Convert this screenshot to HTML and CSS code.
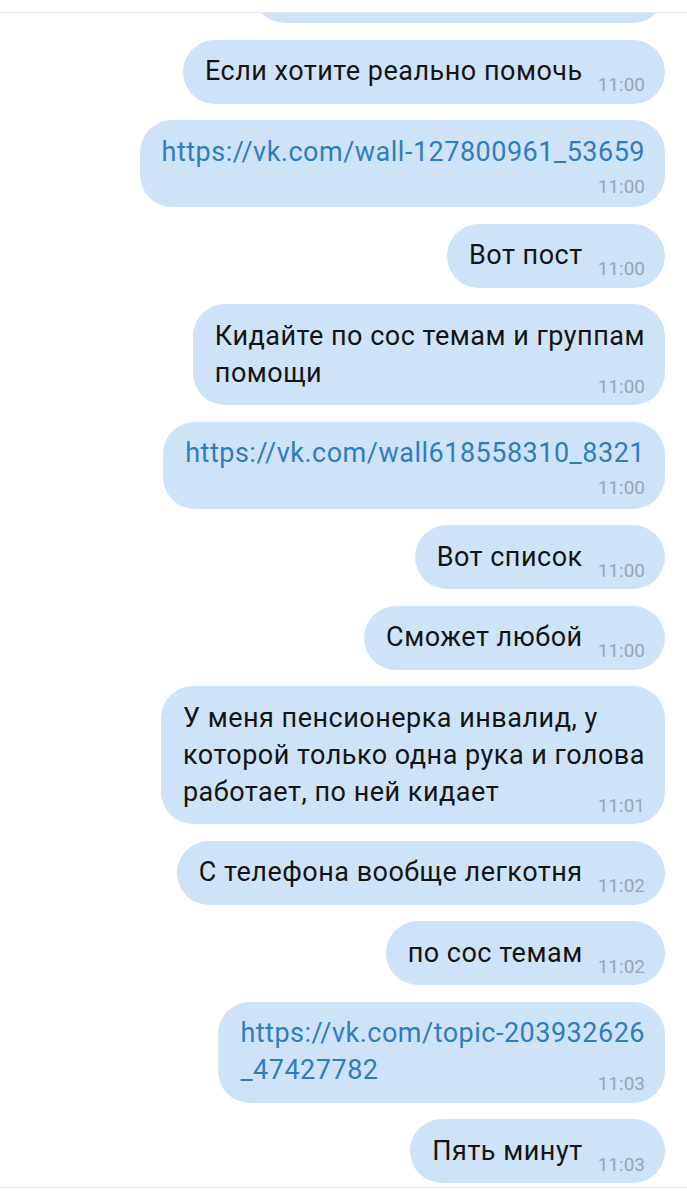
FILE: index.html
```html
<!DOCTYPE html>
<html lang="ru">
<head>
<meta charset="utf-8">
<title>Чат</title>
<link rel="stylesheet" href="styles.css">
</head>
<body>
<div class="screen">
  <div class="topbar"></div>
  <div class="chat">
    <div class="bubble partial"></div>

    <div class="bubble">Если хотите реально помочь<span class="time">11:00</span></div>

    <div class="bubble link-bubble"><a class="link" href="#">https://vk.com/wall-127800961_53659</a><div class="time-line">11:00</div></div>

    <div class="bubble">Вот пост<span class="time">11:00</span></div>

    <div class="bubble">Кидайте по сос темам и группам<br>помощи<span class="time">11:00</span></div>

    <div class="bubble link-bubble"><a class="link" href="#">https://vk.com/wall618558310_8321</a><div class="time-line">11:00</div></div>

    <div class="bubble">Вот список<span class="time">11:00</span></div>

    <div class="bubble">Сможет любой<span class="time">11:00</span></div>

    <div class="bubble">У меня пенсионерка инвалид, у<br>которой только одна рука и голова<br>работает, по ней кидает<span class="time">11:01</span></div>

    <div class="bubble">С телефона вообще легкотня<span class="time">11:02</span></div>

    <div class="bubble">по сос темам<span class="time">11:02</span></div>

    <div class="bubble"><a class="link" href="#">https://vk.com/topic-203932626<br>_47427782</a><span class="time">11:03</span></div>

    <div class="bubble">Пять минут<span class="time">11:03</span></div>
  </div>
  <div class="bottombar"></div>
</div>
</body>
</html>
```

FILE: styles.css
```css
* { box-sizing: border-box; }

html, body {
  margin: 0;
  padding: 0;
  background: #ffffff;
}

.screen {
  width: 687px;
  height: 1200px;
  display: flex;
  flex-direction: column;
  overflow: hidden;
  font-family: Roboto, "Noto Sans", "Liberation Sans", sans-serif;
}

.topbar {
  height: 13px;
  flex: none;
  background: #ffffff;
  border-bottom: 1px solid #e4e6e9;
}

.bottombar {
  height: 13px;
  flex: none;
  background: #ffffff;
  border-top: 1px solid #e8eaec;
}

.chat {
  flex: 1;
  overflow: hidden;
  display: flex;
  flex-direction: column;
  align-items: flex-end;
  gap: 16.5px;
  padding-right: 22px;
}

.bubble {
  display: flow-root;
  width: max-content;
  max-width: 560px;
  background: #cfe3f8;
  border-radius: 32px;
  padding: 13.5px 20px 13.5px 22px;
  font-size: 27px;
  letter-spacing: 0.5px;
  line-height: 37px;
  color: #141414;
  white-space: nowrap;
}

.bubble.partial {
  flex: none;
  width: 412px;
  height: 64px;
  margin-top: -54px;
}

.time {
  float: right;
  margin: 26px 0 0 15px;
  font-size: 19px;
  letter-spacing: 0;
  line-height: 11px;
  color: #9aa6b2;
}

.time-line {
  margin-top: 8px;
  font-size: 19px;
  letter-spacing: 0;
  line-height: 15px;
  color: #9aa6b2;
  text-align: right;
}

.link {
  color: #2f7dbf;
  text-decoration: none;
}
```
